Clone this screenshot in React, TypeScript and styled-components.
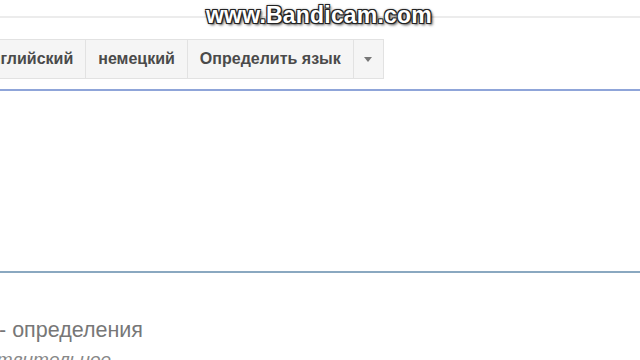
import React from 'react';
import styled, { createGlobalStyle } from 'styled-components';

const GlobalStyle = createGlobalStyle`
  html, body {
    margin: 0;
    padding: 0;
    background: #ffffff;
    overflow: hidden;
  }
  body {
    font-family: "Liberation Sans", Arial, sans-serif;
  }
`;

const Page = styled.div`
  position: relative;
  width: 640px;
  height: 360px;
  overflow: hidden;
  background: #fff;
`;

const TopBar = styled.div`
  height: 16px;
  border-bottom: 2px solid #ececec;
`;

const Toolbar = styled.div`
  display: flex;
  margin-top: 21px;
  margin-left: -30px;
`;

const LangButton = styled.div<{ $narrow?: boolean }>`
  display: flex;
  align-items: center;
  justify-content: center;
  height: 40px;
  box-sizing: border-box;
  padding: 0 ${(p) => (p.$narrow ? '0' : '12px')};
  width: ${(p) => (p.$narrow ? '31px' : 'auto')};
  background: #f5f5f5;
  border: 1px solid #e2e2e2;
  margin-left: -1px;
  color: #4a4a4a;
  font-size: 16px;
  font-weight: bold;
  white-space: nowrap;
`;

const Caret = styled.span`
  width: 0;
  height: 0;
  border-left: 4px solid transparent;
  border-right: 4px solid transparent;
  border-top: 5px solid #777;
`;

const SourceBox = styled.div`
  margin-top: 10px;
  height: 180px;
  border-top: 2px solid #8fa5d9;
  border-bottom: 2px solid #8aa8c0;
  background: #fff;
`;

const Definitions = styled.div`
  padding-top: 44px;
  color: #777;
`;

const DefTitle = styled.div`
  font-size: 21.5px;
  line-height: 26px;
  margin-left: -1px;
`;

const PartOfSpeech = styled.div`
  font-size: 19px;
  font-style: italic;
  line-height: 22px;
  margin-top: 6px;
  margin-left: -58px;
  color: #888;
`;

const Watermark = styled.div`
  position: absolute;
  top: 2px;
  left: 0;
  right: 0;
  text-align: center;
  margin-left: -2px;
  font-family: "Liberation Sans", Arial, sans-serif;
  font-size: 23px;
  font-weight: bold;
  color: #ffffff;
  letter-spacing: 0.2px;
  text-shadow:
    -1px -1px 0 #222, 1px -1px 0 #222, -1px 1px 0 #222, 1px 1px 0 #222,
    0 0 3px #000, 2px 2px 3px rgba(0, 0, 0, 0.7);
`;

export default function App() {
  return (
    <Page>
      <GlobalStyle />
      <TopBar />
      <Toolbar>
        <LangButton>английский</LangButton>
        <LangButton>немецкий</LangButton>
        <LangButton>Определить язык</LangButton>
        <LangButton $narrow>
          <Caret />
        </LangButton>
      </Toolbar>
      <SourceBox />
      <Definitions>
        <DefTitle>- определения</DefTitle>
        <PartOfSpeech>существительное</PartOfSpeech>
      </Definitions>
      <Watermark>www.Bandicam.com</Watermark>
    </Page>
  );
}
